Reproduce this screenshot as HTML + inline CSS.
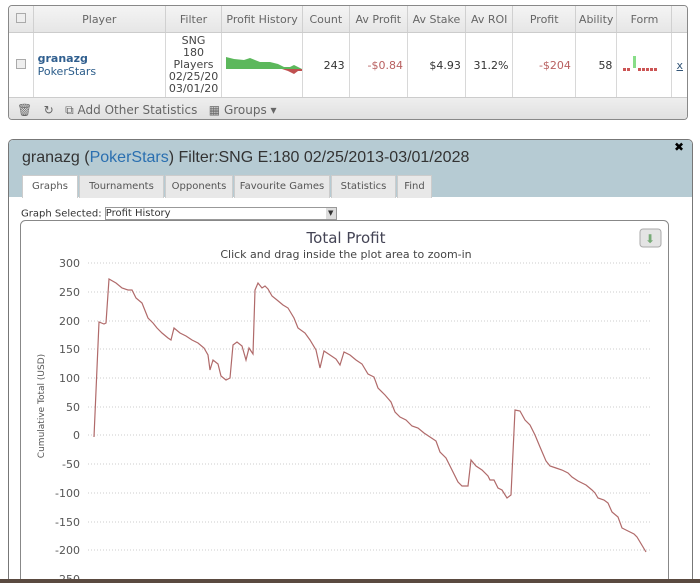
<!DOCTYPE html><html style="overflow:hidden;height:583px"><head><style>
body{margin:0;width:700px;height:583px;overflow:hidden;background:#fff;font-family:"DejaVu Sans","Liberation Sans",sans-serif;position:relative}
.t{position:absolute;left:8px;top:5px;width:678px;height:113px;border:1px solid #888;border-radius:4px;overflow:hidden;font-size:11px;color:#555}
table{border-collapse:collapse;width:100%}
th{height:24px;font-weight:normal;background:linear-gradient(#f4f4f4,#e6e6e6);border-right:1px solid #d0d0d0;border-bottom:1px solid #ccc;color:#666}
td{height:61px;padding:0 4px;border-right:1px solid #d8d8d8;border-bottom:1px solid #ccc;text-align:right}
.cb{display:inline-block;width:8px;height:8px;border:1px solid #aaa;background:#eee}
.foot{height:26px;background:linear-gradient(#eee,#ddd);color:#666;font-size:12px;line-height:24px;padding-left:8px}
.d{position:absolute;left:8px;top:139px;width:683px;height:470px;border:1px solid #777;border-radius:5px;background:#fff;overflow:hidden}
.hd{background:#b6cbd3;height:57px;position:relative}
.ti{position:absolute;left:13px;top:9px;font-family:"Liberation Sans",sans-serif;font-size:16px;color:#333}
.tab{position:absolute;top:35px;height:22px;background:#e8e8e8;border:1px solid #ccc;border-bottom:none;font-size:10px;color:#555;line-height:22px;text-align:center}
</style></head><body>
<div class="t"><table>
<tr><th style="width:23px"><span class="cb"></span></th><th style="width:137px">Player</th><th style="width:54px">Filter</th><th style="width:78px">Profit History</th><th style="width:45px">Count</th><th style="width:57px">Av Profit</th><th style="width:57px">Av Stake</th><th style="width:45px">Av ROI</th><th style="width:62px">Profit</th><th style="width:39px">Ability</th><th style="width:52px">Form</th><th style="border-right:none"></th></tr>
<tr><td style="text-align:center;padding:0"><span class="cb"></span></td><td style="text-align:left;color:#2b5c8a;line-height:13px"><b style="color:#305f8f">granazg</b><br>PokerStars</td><td style="text-align:center;padding:0;line-height:12px;color:#444">SNG<br>180<br>Players<br>02/25/20<br>03/01/20</td>
<td style="padding:0"><svg width="78" height="61"><polygon points="2,24 10,26 20,27 26,25 36,29 46,29 54,31 60,34 66,34 70,32 78,36 78,36 2,36" fill="#5cb85c"/><polygon points="58,36 64,38 70,41 74,38 78,38 78,36 58,36" fill="#c05050"/></svg></td>
<td style="color:#333">243</td><td style="color:#b86060">-$0.84</td><td style="color:#333">$4.93</td><td style="color:#333">31.2%</td><td style="color:#b86060">-$204</td><td style="color:#333">58</td>
<td style="text-align:left"><svg width="46" height="20"><rect x="2" y="14" width="3" height="3" fill="#c55"/><rect x="6" y="14" width="3" height="3" fill="#c55"/><rect x="12" y="2" width="3" height="12" fill="#8d8"/><rect x="17" y="14" width="3" height="3" fill="#c55"/><rect x="21" y="14" width="3" height="3" fill="#c55"/><rect x="25" y="14" width="3" height="3" fill="#c55"/><rect x="29" y="14" width="3" height="3" fill="#c55"/><rect x="33" y="14" width="3" height="3" fill="#c55"/></svg></td>
<td style="border-right:none;text-align:center;color:#357;text-decoration:underline">x</td></tr></table>
<div class="foot">🗑 &nbsp; ↻ &nbsp; ⧉ Add Other Statistics &nbsp; ▦ Groups ▾</div></div>
<div class="d"><div class="hd"><div class="ti">granazg (<span style="color:#2a6fb0">PokerStars</span>) Filter:SNG E:180 02/25/2013-03/01/2028</div>
<div style="position:absolute;right:8px;top:0;font-size:12px;font-weight:bold">✖</div>
<div class="tab" style="left:13px;width:54px;background:#fff">Graphs</div>
<div class="tab" style="left:70px;width:83px">Tournaments</div>
<div class="tab" style="left:156px;width:66px">Opponents</div>
<div class="tab" style="left:225px;width:94px">Favourite Games</div>
<div class="tab" style="left:322px;width:63px">Statistics</div>
<div class="tab" style="left:388px;width:33px">Find</div></div>
<div style="position:absolute;left:12px;top:67px;font-size:10px;color:#333">Graph Selected: <span style="display:inline-block;width:230px;border:1px solid #999;height:11px;vertical-align:middle;line-height:11px;position:relative">Profit History<span style="position:absolute;right:0;top:0;width:10px;height:11px;background:#ddd;font-size:7px;text-align:center">▼</span></span></div>
</div>
<svg style="position:absolute;left:0;top:0" width="700" height="583">
<rect x="20.5" y="220.5" width="648" height="380" rx="5" fill="#fff" stroke="#888"/>
<text x="346" y="243" font-family="DejaVu Sans" font-size="15" fill="#445" text-anchor="middle">Total Profit</text>
<text x="346" y="258" font-family="DejaVu Sans" font-size="11" fill="#444" text-anchor="middle">Click and drag inside the plot area to zoom-in</text>
<rect x="640" y="229" width="21" height="18" rx="3" fill="#e4e4e4" stroke="#aaa"/><text x="650" y="243" font-size="12" fill="#7a7" text-anchor="middle">⬇</text>
<g font-family="DejaVu Sans" font-size="11" fill="#555" text-anchor="end">
<text x="80" y="267">300</text><text x="80" y="296">250</text><text x="80" y="325">200</text><text x="80" y="353">150</text><text x="80" y="382">100</text><text x="80" y="411">50</text><text x="80" y="439">0</text><text x="80" y="468">-50</text><text x="80" y="497">-100</text><text x="80" y="526">-150</text><text x="80" y="554">-200</text><text x="80" y="583">-250</text></g>
<g stroke="#ccc" stroke-dasharray="1,2"><line x1="88" x2="652" y1="263" y2="263"/><line x1="88" x2="652" y1="292" y2="292"/><line x1="88" x2="652" y1="321" y2="321"/><line x1="88" x2="652" y1="349" y2="349"/><line x1="88" x2="652" y1="378" y2="378"/><line x1="88" x2="652" y1="407" y2="407"/><line x1="88" x2="652" y1="435" y2="435"/><line x1="88" x2="652" y1="464" y2="464"/><line x1="88" x2="652" y1="493" y2="493"/><line x1="88" x2="652" y1="522" y2="522"/><line x1="88" x2="652" y1="550" y2="550"/></g>
<text transform="translate(44,406) rotate(-90)" font-family="DejaVu Sans" font-size="9" fill="#555" text-anchor="middle">Cumulative Total (USD)</text>
<polyline fill="none" stroke="#b06a6a" stroke-width="1.2" points="94,437 99,322 104,324 106,323 109,279 116,283 122,288 128,290 132,290 136,298 142,303 148,318 153,323 157,328 162,333 168,338 171,340 174,328 180,333 186,336 192,340 198,343 204,348 208,355 210,370 213,360 218,364 221,376 226,380 230,378 233,345 237,342 242,346 246,360 249,348 253,354 255,290 258,283 262,288 265,286 268,289 272,296 277,300 283,305 288,308 294,318 298,328 305,333 310,340 316,350 320,368 324,351 330,355 336,359 340,365 344,352 350,355 356,360 362,364 368,374 374,377 378,388 385,395 391,402 395,412 400,417 406,420 412,426 418,428 424,433 430,437 436,441 440,452 446,458 452,470 458,482 462,486 468,486 471,460 476,466 482,470 488,476 490,480 494,480 498,488 502,490 507,498 511,495 515,410 520,411 525,420 530,425 535,435 540,447 546,461 550,466 556,468 562,470 568,473 572,477 578,481 586,485 592,490 595,493 598,498 604,500 608,503 612,512 618,517 622,528 628,531 634,534 637,537 646,552"/>
<rect x="0" y="579" width="700" height="4" fill="#5a4a40"/>
</svg>
</body></html>
